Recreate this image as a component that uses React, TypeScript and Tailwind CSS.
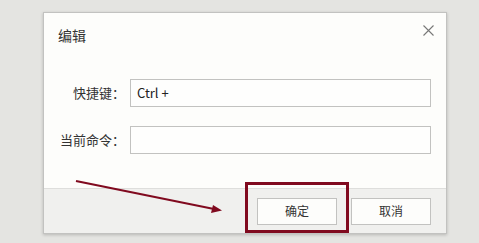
export default function App() {
  return (
    <div
      className="relative w-[479px] h-[243px] bg-[#e4e4e1] pt-[12px] pl-[43px]"
      style={{ fontFamily: '"Noto Sans CJK SC", "Noto Sans", sans-serif' }}
    >
      <div className="flex flex-col w-[404px] h-[222px] bg-[#fdfdfb] border border-[#c2c2c0] shadow-[0_1px_3px_rgba(0,0,0,0.2)]">
        <div className="flex justify-between items-start h-[66px] pl-[14px] pr-[12px] pt-[12px]">
          <span className="text-[14px] leading-[20px] text-[#333]">编辑</span>
          <svg width="11" height="11" viewBox="0 0 11 11" className="mt-[0px]">
            <path d="M0.5 0.5 L10.5 10.5 M10.5 0.5 L0.5 10.5" stroke="#777" strokeWidth="1.1" />
          </svg>
        </div>
        <div className="flex flex-col gap-[19px] pr-[15px]">
          <div className="flex items-center">
            <label className="w-[86px] pr-[5px] text-right text-[13px] text-[#333]">快捷键：</label>
            <div className="flex-1 h-[28px] border border-[#c2c2c0] bg-[#fefefd] flex items-center pl-[6px] text-[13px] text-[#222]">
              Ctrl +
            </div>
          </div>
          <div className="flex items-center">
            <label className="w-[86px] pr-[5px] text-right text-[13px] text-[#333]">当前命令：</label>
            <div className="flex-1 h-[28px] border border-[#c2c2c0] bg-[#fefefd]" />
          </div>
        </div>
        <div className="mt-auto h-[45px] bg-[#f0f0ee] border-t border-[#dededc] flex justify-end items-center gap-[14px] pr-[15px]">
          <button className="w-[80px] h-[27px] border border-[#c2c2c0] bg-[#fdfdfb] text-[12px] text-[#333]">确定</button>
          <button className="w-[80px] h-[27px] border border-[#c2c2c0] bg-[#fdfdfb] text-[12px] text-[#333]">取消</button>
        </div>
      </div>
      <div className="absolute left-[245px] top-[182px] w-[104px] h-[51px] border-[3px] border-[#800a1f]" />
      <svg className="absolute left-0 top-0" width="479" height="243">
        <line x1="76" y1="181" x2="214" y2="209" stroke="#800a1f" strokeWidth="2.2" />
        <polygon points="222,210.5 211,213 213,205" fill="#800a1f" />
      </svg>
    </div>
  );
}
